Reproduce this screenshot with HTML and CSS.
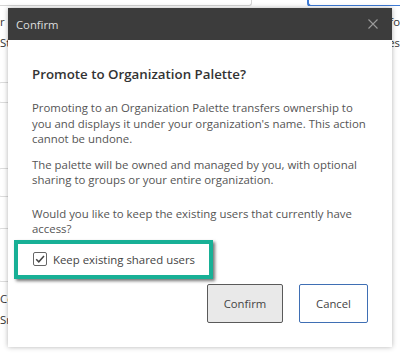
FILE: index.html
```html
<!DOCTYPE html>
<html lang="en">
<head>
    <meta charset="UTF-8" />
    <title>Confirm</title>
    <link rel="stylesheet" href="styles.css">
</head>
<body>
    <div class="page">
        <div class="topbar">
            <div class="search"></div>
            <div class="search focused"></div>
        </div>
        <div class="row row-first">
            <span>r</span>
            <span>Info</span>
        </div>
        <div class="row">
            <span>Status</span>
            <span>Palettes</span>
        </div>
        <div class="side-cards">
            <div class="card card-a"></div>
            <div class="card card-b"></div>
            <div class="card card-c"></div>
        </div>
        <div class="row row-lower">
            <span>Colors</span>
        </div>
        <div class="row">
            <span>Snapshots</span>
        </div>
    </div>

    <div class="dialog">
        <div class="dialog-header">
            <span class="dialog-title">Confirm</span>
            <svg class="close-icon" width="10" height="10" viewBox="0 0 10 10">
                <path d="M0.5 0.5 L9.5 9.5 M9.5 0.5 L0.5 9.5" stroke="#9b9b9b" stroke-width="1.1" fill="none" />
            </svg>
        </div>
        <div class="dialog-body">
            <h2>Promote to Organization Palette?</h2>
            <p class="p-first">Promoting to an Organization Palette transfers ownership to you and displays it under your organization's name. This action cannot be undone.</p>
            <p class="p-second">The palette will be owned and managed by you, with optional sharing to groups or your entire organization.</p>
            <p class="p-third">Would you like to keep the existing users that currently have access?</p>

            <label class="highlight">
                <span class="checkbox">
                    <svg width="12" height="12" viewBox="0 0 12 12">
                        <path d="M2.2 6.2 L4.8 8.8 L10 3" stroke="#444" stroke-width="1.5" fill="none" />
                    </svg>
                </span>
                <span>Keep existing shared users</span>
            </label>

            <div class="actions">
                <button class="btn btn-confirm">Confirm</button>
                <button class="btn btn-cancel">Cancel</button>
            </div>
        </div>
    </div>
</body>
</html>
```
FILE: styles.css
```css
* {
    margin: 0;
    padding: 0;
    box-sizing: border-box;
}

body {
    font-family: 'Open Sans', 'Noto Sans', sans-serif;
    font-size: 11.4px;
    color: #333;
    background: #fff;
    overflow: hidden;
    height: 355px;
    position: relative;
}

/* Page behind the dialog */
.page {
    height: 100%;
    overflow: hidden;
}

.topbar {
    height: 6px;
    display: flex;
    align-items: flex-end;
    overflow: hidden;
}

.search {
    width: 252px;
    height: 20px;
    border: 1px solid #d4d4d4;
    border-top: none;
    border-left: none;
    border-radius: 0 0 3px 0;
    flex-shrink: 0;
}

.search.focused {
    width: auto;
    flex: 1;
    height: 20px;
    margin-left: 55px;
    margin-bottom: -1px;
    border: 2px solid #3e7bd6;
    border-top: none;
    border-right: none;
    border-radius: 0 0 0 4px;
}

.row {
    display: flex;
    justify-content: space-between;
    line-height: 20px;
    margin-top: 1px;
    white-space: nowrap;
}

.row-first {
    margin-top: 6px;
}

.side-cards {
    margin-top: 29px;
    margin-left: -2px;
    width: 80px;
}

.card {
    border: 1px solid #dcdcdc;
    border-radius: 3px;
}

.card-a { height: 21px; }
.card-b { height: 29px; margin-top: 65px; }
.card-c { height: 54px; margin-top: 31px; }

.row-lower {
    margin-top: 7px;
}

/* Dialog */
.dialog {
    position: absolute;
    top: 8px;
    left: 8px;
    width: 384px;
    height: 339px;
    background: #fff;
    box-shadow: 0 0 5px rgba(0, 0, 0, 0.3);
}

.dialog-header {
    height: 32px;
    background: #3c3c3c;
    padding: 0 14px 0 8px;
    display: flex;
    align-items: center;
    justify-content: space-between;
}

.dialog-title {
    color: #dedede;
    font-size: 11.3px;
}

.dialog-body {
    padding: 24px 24px 0;
    color: #555;
}

.dialog-body h2 {
    font-size: 13.3px;
    font-weight: 600;
    line-height: 20px;
    color: #333;
}

.dialog-body p {
    line-height: 15.5px;
}

.p-first { margin-top: 16px; }
.p-second { margin-top: 10px; }
.p-third { margin-top: 18px; }

.highlight {
    display: flex;
    align-items: center;
    gap: 6px;
    width: 199px;
    height: 39px;
    margin-top: 3px;
    margin-left: -18px;
    padding-left: 15px;
    border: 4px solid #18b096;
    box-shadow: 2px 2px 3px rgba(0, 0, 0, 0.55);
    color: #444;
}

.checkbox {
    width: 14px;
    height: 14px;
    border: 1px solid #666;
    border-radius: 2px;
    display: flex;
    align-items: center;
    justify-content: center;
    background: #fff;
}

.actions {
    display: flex;
    justify-content: flex-end;
    gap: 16px;
    margin-top: 5px;
}

.btn {
    height: 39px;
    font-family: inherit;
    font-size: 11.3px;
    color: #444;
    border-radius: 2px;
    cursor: pointer;
}

.btn-confirm {
    width: 76px;
    background: #e9e9e9;
    border: 1px solid #5a5a5a;
}

.btn-cancel {
    width: 69px;
    background: #fff;
    border: 1px solid #3f6fb4;
}
```
